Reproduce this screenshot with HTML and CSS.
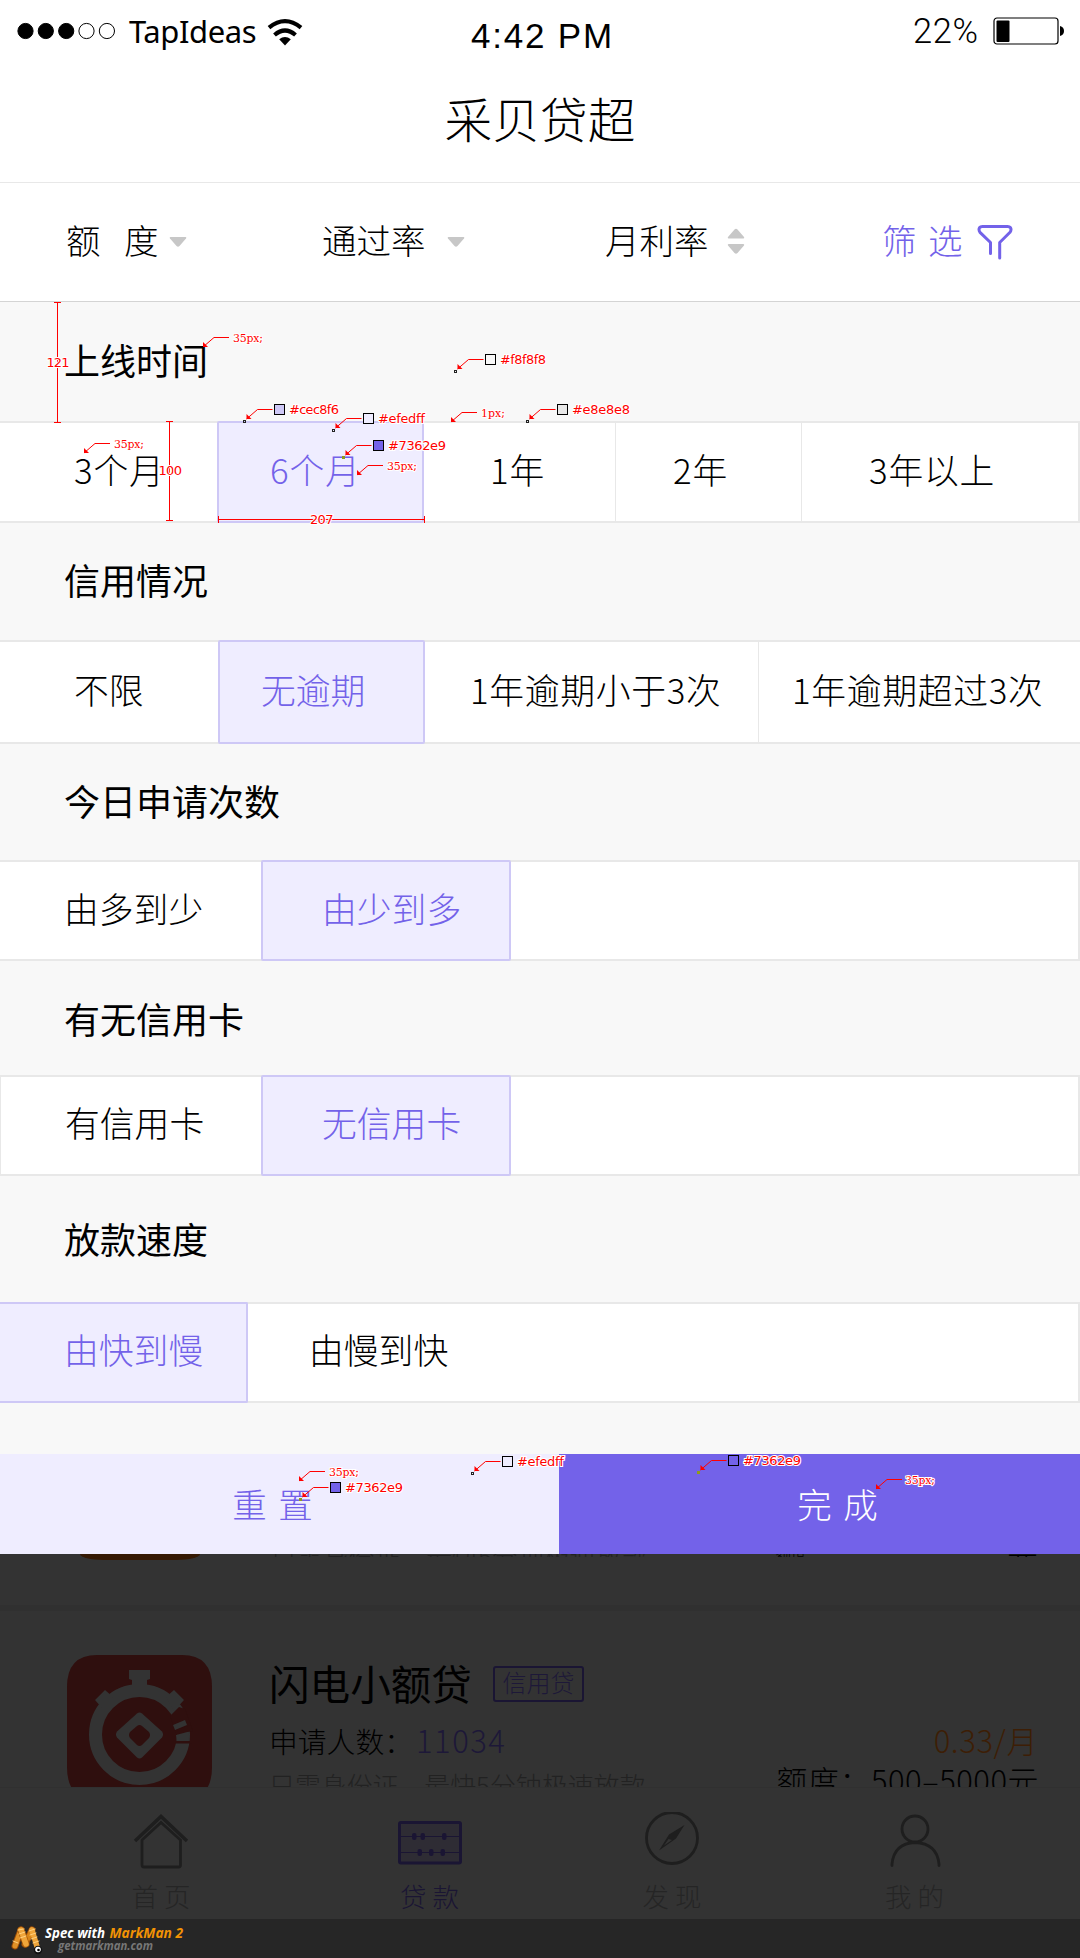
FILE: index.html
```html
<!DOCTYPE html>
<html lang="zh-CN">
<head>
<meta charset="utf-8">
<title>采贝贷超</title>
<link rel="stylesheet" href="styles.css">
</head>
<body>
<div class="screen">
  <header class="status">
    <svg class="signal" width="98" height="18" viewBox="0 0 98 18"><g stroke="#000" stroke-width="1"><circle cx="8.5" cy="9" r="7.6"/><circle cx="28.8" cy="9" r="7.6"/><circle cx="49.2" cy="9" r="7.6"/><circle cx="69.5" cy="9" r="7.6" fill="none"/><circle cx="89.9" cy="9" r="7.6" fill="none"/></g></svg>
    <span class="carrier">TapIdeas</span>
    <svg class="wifi" width="36" height="27" viewBox="0 0 36 27"><path d="M2 8.7Q18-4.300 34 8.700" fill="none" stroke="#000" stroke-width="4.200"/><path d="M7.500 16Q18 7 28.500 16" fill="none" stroke="#000" stroke-width="4.200"/><path d="M12.200 20.200Q18 15.600 23.800 20.200L18 26.500Z"/></svg>
    <span class="time">4:42 PM</span>
    <span class="percent">22%</span>
    <svg class="battery" width="72" height="28" viewBox="0 0 72 28"><rect x="1" y="1" width="64" height="26" rx="3" fill="none" stroke="#000" stroke-width="1.200"/><rect x="3.500" y="3.500" width="13" height="21.500" rx="1"/><path d="M67 9Q71 10 71 14T67 19Z"/></svg>
  </header>
  <h1 class="title">采贝贷超</h1>

  <nav class="filters">
    <div class="filter f-amount"><span class="wide">额 度</span><svg width="18" height="10" viewBox="0 0 18 10"><path d="M1.500 0H16.500Q17.800.500 17 1.600L10.500 9Q9 10.500 7.500 9L1 1.600Q.200.500 1.500 0Z" fill="#c7c7c7"/></svg></div>
    <div class="filter f-pass"><span>通过率</span><svg width="18" height="10" viewBox="0 0 18 10"><path d="M1.500 0H16.500Q17.800.500 17 1.600L10.500 9Q9 10.500 7.500 9L1 1.600Q.200.500 1.500 0Z" fill="#c7c7c7"/></svg></div>
    <div class="filter f-rate"><span>月利率</span><svg width="18" height="27" viewBox="0 0 18 27"><path d="M1.500 10.500H16.500Q17.800 10 17 9L10.500 1.500Q9 0 7.500 1.500L1 9Q.200 10 1.500 10.500ZM1.500 16H16.500Q17.800 16.500 17 17.600L10.500 25Q9 26.500 7.500 25L1 17.600Q.200 16.500 1.500 16Z" fill="#c7c7c7"/></svg></div>
    <div class="filter f-pick"><span class="spaced">筛 选</span><svg width="36" height="36" viewBox="0 0 36 36"><path d="M13.500 29.500V18.500L3 8.300Q1.300 6 2.500 3.700Q3.400 2.400 5.500 2.400H30.500Q32.600 2.400 33.500 3.700Q34.700 6 33 8.300L22.700 18.500V34" fill="none" stroke="#7362e9" stroke-width="3" stroke-linecap="round" stroke-linejoin="round"/></svg></div>
  </nav>

  <main class="panel">
    <h2 class="group g1">上线时间</h2>
    <div class="row r1 closed">
      <span class="cell c217">3个月</span><span class="cell c207 on p54">6个月</span><span class="cell c192 p69">1年</span><span class="cell c186 line p59">2年</span><span class="cell line p68">3年以上</span>
    </div>
    <h2 class="group g2">信用情况</h2>
    <div class="row r2">
      <span class="cell c218 plain">不限</span><span class="cell c207 on p44 plain">无逾期</span><span class="cell c333 p47">1年逾期小于3次</span><span class="cell line p34">1年逾期超过3次</span>
    </div>
    <h2 class="group g3">今日申请次数</h2>
    <div class="row r3 closed">
      <span class="cell c261">由多到少</span><span class="cell c250 on">由少到多</span>
    </div>
    <h2 class="group g4">有无信用卡</h2>
    <div class="row r4 closed">
      <span class="cell c261 edge">有信用卡</span><span class="cell c250 on">无信用卡</span>
    </div>
    <h2 class="group g5">放款速度</h2>
    <div class="row r5 closed">
      <span class="cell c248 on first">由快到慢</span><span class="cell p62">由慢到快</span>
    </div>
  </main>

  <div class="actions">
    <button class="reset">重 置</button>
    <button class="done">完 成</button>
  </div>

  <section class="list">
    <article class="card previous">
      <div class="amber"></div>
      <p class="desc">只需身份证，最快5分钟极速放款</p>
      <p class="amount">额度：</p>
      <p class="unit">元</p>
    </article>
    <article class="card">
      <svg class="logo" width="145" height="132" viewBox="0 0 145 132"><path d="M30 0H115Q145 0 145 32V112Q145 145 115 145H30Q0 145 0 112V32Q0 0 30 0Z" fill="#2f0f0e"/><ellipse cx="72.500" cy="79.500" rx="44" ry="44" fill="none" stroke="#333" stroke-width="13"/><path d="M62 15H83V24L80 25V34H65V25L62 24ZM28 45L38 35L46 42L35 53ZM99 42L107 35L117 45L107 56Z" fill="#333"/><path d="M103 61L112 52L118 54L126 76L109 78Z" fill="#2f0f0e"/><path d="M106 70L118 65L120 70L108 75ZM109 80L121 76L122 86L110 86.500Z" fill="#333"/><path d="M109 75L124 70L124 76L109 80ZM108 86H125V88.500H109Z" fill="#2f0f0e"/><path d="M70 59L50 77Q48 80 50 83L70 103Q72.500 105 75 103L95 83Q97 80 95 77L75 59Q72.500 57 70 59Z" fill="#333" transform="translate(0 -.5)"/><path d="M70 71L63 77Q61 80 63 83L70 90Q72.500 92 75 90L82 83Q84 80 82 77L75 71Q72.500 69 70 71Z" fill="#2f0f0e"/></svg>
      <div class="info">
        <div class="name"><b>闪电小额贷</b><i>信用贷</i></div>
        <p class="people">申请人数：<em>11034</em></p>
        <p class="desc">只需身份证，最快5分钟极速放款</p>
      </div>
      <div class="terms">
        <p class="rate">0.33/月</p>
        <p class="amount">额度：500–5000元</p>
      </div>
    </article>
  </section>

  <nav class="tabs">
    <a class="tab t-home"><svg width="60" height="60" viewBox="0 0 60 60" fill="none" stroke="#1e1e1e"><path d="M4 29L30 4.500L56 29" stroke-width="3.500"/><path d="M11 28L30 10.500L49.500 28V53Q49.500 55 47.500 55H13Q11 55 11 53Z" stroke-width="2.800"/></svg><span>首 页</span></a>
    <a class="tab t-loan"><svg width="66" height="60" viewBox="0 0 66 60"><rect x="2.500" y="10.500" width="61" height="40.500" rx="1.500" fill="#2e2c34" stroke="#1a1533" stroke-width="3"/><path d="M2 24.500H64M2 40.500H64" stroke="#1a1533" stroke-width="1.200"/><g fill="#1a1533"><rect x="15" y="21" width="4.500" height="7" rx="2"/><rect x="23.500" y="21" width="4.500" height="7" rx="2"/><rect x="45" y="21" width="4.500" height="7" rx="2"/><rect x="20.500" y="37" width="4.500" height="7" rx="2"/><rect x="32" y="37" width="4.500" height="7" rx="2"/><rect x="43.500" y="37" width="4.500" height="7" rx="2"/></g></svg><span>贷 款</span></a>
    <a class="tab t-find"><svg width="60" height="60" viewBox="0 0 60 60"><circle cx="30" cy="26" r="25.500" fill="none" stroke="#1e1e1e" stroke-width="2.800"/><path fill-rule="evenodd" d="M42.500 13L34 26.500L17 38.500L27 22.500ZM26.500 27L22 33.500L30 28Z" fill="#1e1e1e"/></svg><span>发 现</span></a>
    <a class="tab t-me"><svg width="60" height="60" viewBox="0 0 60 60" fill="none" stroke="#1e1e1e" stroke-width="2.800"><circle cx="30" cy="17" r="13"/><path d="M7 53.500V52Q9 31.500 30 30.500Q52 31.500 54 52V53.500" stroke-linecap="round"/></svg><span>我 的</span></a>
  </nav>

  <footer class="credit">
    <svg width="34" height="32" viewBox="0 0 34 32" fill="none" stroke-linecap="round"><path d="M5 23L11 7" stroke="#9a4c08" stroke-width="7"/><path d="M5 23L11 7" stroke="#e09128" stroke-width="5"/><path d="M22 7L15 21" stroke="#9a4c08" stroke-width="7"/><path d="M22 7L15 21" stroke="#d88619" stroke-width="5"/><path d="M11 7L16 21" stroke="#a95908" stroke-width="7"/><path d="M11 7L16 21M22 7L28 27" stroke="#efa53a" stroke-width="5.500"/><path d="M8 7L14 6M9 11L15 9M10 15L16 13M19 8L25 6M20 12L26 10M21 16L27 14M23 20L29 18M3 18L8 20" stroke="#ffd07e" stroke-width="1"/><circle cx="28" cy="27" r="4.200" fill="#111"/><circle cx="28" cy="26.500" r="2.800" fill="#fff"/><circle cx="28.500" cy="27" r="1.300" fill="#000"/></svg>
    <svg width="150" height="38" viewBox="0 0 150 38"><text class="brand" x="1" y="19" textLength="60" lengthAdjust="spacingAndGlyphs" fill="#fff">Spec with</text><text class="brand" x="65.500" y="19" textLength="73.500" lengthAdjust="spacingAndGlyphs" fill="#f29204">MarkMan 2</text><text class="site" x="14" y="31" textLength="95" lengthAdjust="spacingAndGlyphs" fill="#777">getmarkman.com</text></svg>
  </footer>

  <svg class="notes" width="1080" height="1958" viewBox="0 0 1080 1958">
    <defs>
      <g id="lead"><path d="M0 0L11-9.500H26" fill="none" stroke="#f00"/><path d="M0 0L0-5L5 0Z" fill="#f00"/></g>
      <g id="pick"><use href="#lead" x="2" y="-2.500"/><rect x="-1" y="-1" width="2" height="2" fill="none" stroke="#222"/></g>
    </defs>
    <g stroke="#f00" fill="none"><path d="M57.500 302V422M54 302.500H61M54 422.500H61M169.500 421V520M166 421.500H173M166 520.500H173M218 519.500H424M218.500 516V523M424.500 516V523"/></g>
    <g class="size"><text x="46.500" y="366.500" textLength="23">121</text><text x="158.500" y="474.500" textLength="23.500">100</text><text x="310" y="523.500" textLength="23.500">207</text></g>
    <use href="#lead" x="203" y="347"/><use href="#lead" x="84" y="453"/><use href="#lead" x="357" y="475"/><use href="#lead" x="451" y="422"/><use href="#lead" x="299" y="1481"/><use href="#lead" x="876" y="1489"/>
    <g class="px"><text x="233" y="342" textLength="30">35px;</text><text x="114" y="448" textLength="30">35px;</text><text x="387" y="470" textLength="30">35px;</text><text x="481" y="417" textLength="24">1px;</text><text x="329" y="1476" textLength="30">35px;</text><text x="905" y="1484" textLength="30">35px;</text></g>
    <use href="#pick" x="455.500" y="371.500"/><use href="#pick" x="244.500" y="421.500"/><use href="#pick" x="333.500" y="430.500"/><use href="#pick" x="343.500" y="457.500"/><use href="#pick" x="527.500" y="421.500"/><use href="#pick" x="300.500" y="1499.500"/><use href="#pick" x="472.500" y="1473.500"/><use href="#pick" x="698.500" y="1472.500"/>
    <g fill="#8f9a1c"><rect x="342" y="456" width="3" height="3"/><rect x="299" y="1498" width="3" height="3"/><rect x="697" y="1471" width="3" height="3"/></g>
    <g stroke="#000"><rect x="485.500" y="354.500" width="10" height="10" fill="#f8f8f8"/><rect x="274.500" y="404.500" width="10" height="10" fill="#cec8f6"/><rect x="363.500" y="413.500" width="10" height="10" fill="#efedff"/><rect x="373.500" y="440.500" width="10" height="10" fill="#7362e9"/><rect x="557.500" y="404.500" width="10" height="10" fill="#e8e8e8"/><rect x="330.500" y="1482.500" width="10" height="10" fill="#7362e9"/><rect x="502.500" y="1456.500" width="10" height="10" fill="#efedff"/><rect x="728.500" y="1455.500" width="10" height="10" fill="#7362e9"/></g>
    <g class="hex"><text x="500" y="364" textLength="46">#f8f8f8</text><text x="289" y="414" textLength="50">#cec8f6</text><text x="378" y="423" textLength="47">#efedff</text><text x="388" y="450" textLength="58">#7362e9</text><text x="572" y="414" textLength="58">#e8e8e8</text><text x="345" y="1492" textLength="58">#7362e9</text><text x="517" y="1466" textLength="47">#efedff</text><text x="743" y="1465" textLength="58">#7362e9</text></g>
  </svg>
</div>
</body>
</html>
```
FILE: styles.css
```css
* { box-sizing: border-box; }
body { margin: 0; background: #fff; color: #000; font-family: "Noto Sans CJK SC", "Liberation Sans", sans-serif; font-weight: 300; }
p, h1, h2 { margin: 0; font-weight: 300; }
svg { display: block; flex: none; }
.screen { position: relative; width: 1080px; height: 1958px; overflow: hidden; display: flex; flex-direction: column; }
.screen > * { flex: none; }

.status { height: 62px; display: flex; align-items: flex-start; padding-left: 17px; white-space: nowrap; }
.signal { margin-top: 22px; }
.carrier { width: 127px; margin: 9px 0 0 14px; font: 400 31px/44px "Noto Sans", sans-serif; letter-spacing: -.400px; }
.wifi { margin: 19px 0 0 11px; }
.time { width: 146px; margin: 15px 0 0 168px; font: 400 35px/42px "Liberation Sans", sans-serif; letter-spacing: 1.800px; }
.percent { width: 69px; margin: 10px 0 0 296px; font: 300 34.500px/42px "Roboto", sans-serif; letter-spacing: .600px; }
.battery { margin: 17px 0 0 11px; }
.title { height: 120px; font-size: 47.700px; line-height: 111px; text-align: center; }

.filters { height: 120px; display: flex; align-items: center; border-top: 1px solid #e8e8e8; border-bottom: 1px solid #d4d4d4; font-size: 34.500px; line-height: 113px; white-space: nowrap; }
.filter { display: flex; align-items: center; }
.filter span { margin-top: -6px; }
.filter svg { margin-top: -1px; }
.f-amount { width: 256px; padding-left: 66px; gap: 10px; }
.f-pass { width: 284px; padding-left: 66px; gap: 21px; }
.f-rate { width: 342px; padding-left: 65px; gap: 18px; }
.f-pick { color: #7362e9; gap: 14px; }
.wide { word-spacing: 16px; }
.spaced { word-spacing: 4px; }

.panel { height: 1152px; background: #f8f8f8; display: flex; flex-direction: column; }
.group { padding-left: 64px; font-size: 36px; font-weight: 400; }
.g1 { height: 119px; line-height: 115px; }
.g2 { height: 117px; line-height: 113px; }
.g3 { height: 116px; line-height: 112px; }
.g4 { height: 114px; line-height: 115px; }
.g5 { height: 126px; line-height: 125px; }
.row { height: 101px; display: flex; background: #fff; border-top: 2px solid #e8e8e8; border-bottom: 2px solid #e8e8e8; font-size: 34.800px; line-height: 93px; white-space: nowrap; }
.r1 { height: 102px; letter-spacing: .800px; line-height: 92px; }
.r2 { height: 104px; line-height: 94px; letter-spacing: .700px; }
.plain { letter-spacing: 0; }
.r4 { line-height: 90px; }
.r5 { line-height: 91px; }
.closed { border-right: 2px solid #e8e8e8; }
.cell { padding-left: 74px; }
.line { border-left: 1px solid #e8e8e8; }
.edge { border-left: 1px solid #e8e8e8; }
.cell.on { margin: -2px 0; padding-top: 0; border: 2px solid #cec8f6; border-radius: 2px; background: #efedff; color: #7362e9; }
.cell.first { border-left: 0; border-radius: 0 2px 2px 0; }
.c217 { width: 217px; }
.c218 { width: 218px; }
.c207 { width: 207px; }
.c192 { width: 191px; }
.c186 { width: 186px; }
.c333 { width: 333px; }
.c261 { width: 261px; padding-left: 64px; }
.c250 { width: 250px; padding-left: 59px; }
.c248 { width: 248px; padding-left: 64px; }
.edge { padding-left: 64px; }
.p54 { padding-left: 51px; }
.p69 { padding-left: 66px; }
.p59 { padding-left: 57px; }
.p68 { padding-left: 67px; }
.p44 { padding-left: 41px; }
.p47 { padding-left: 45px; }
.p34 { padding-left: 33px; }
.p62 { padding-left: 61px; }

.actions { height: 100px; display: flex; }
.actions button { border: 0; padding: 0 0 3px; font: 300 34.500px/96px "Noto Sans CJK SC", sans-serif; word-spacing: 4px; }
.actions .reset { width: 559px; background: #efedff; color: #7362e9; padding-right: 14px; }
.actions .done { flex: 1; background: #7362e9; color: #fff; padding-left: 36px; }

.list { height: 233px; background: #333; color: #000; overflow: hidden; white-space: nowrap; }
.card { display: flex; height: 232px; padding: 44px 42px 0 67px; }
.card.previous { height: 57px; padding-top: 0; border-bottom: 6px solid #303030; }
.amber { width: 120px; height: 6px; margin: 0 12px 0 13px; background: #351904; border-radius: 0 0 24px 24px / 0 0 6px 6px; }
.previous p { height: 3px; overflow: hidden; line-height: 3px; display: flex; align-items: flex-end; }
.previous p.desc { width: 505px; margin-left: 59px; line-height: 3px; }
.previous p.amount { width: 232px; }
.previous p.unit { font-size: 31px; }
.info { margin-left: 57px; width: 441px; }
.name { display: flex; align-items: center; height: 58px; gap: 21px; }
.name b { font-size: 40.600px; line-height: 58px; font-weight: 400; margin-top: -3px; }
.name i { height: 36px; width: 91px; border: 2px solid #1a1533; border-radius: 3px; color: #1d1838; font: 300 24px/28px "Noto Sans CJK SC", sans-serif; text-align: center; margin-top: -1px; }
.people { font-size: 28.800px; line-height: 53px; height: 56px; }
.people em { font-style: normal; font-size: 31px; color: #1d1838; margin-left: 3px; letter-spacing: 1.500px; }
.desc { font-size: 25.900px; line-height: 32px; color: #222; }
.terms { flex: 1; text-align: right; padding-top: 58px; }
.rate { font-size: 31px; line-height: 54px; height: 50px; color: #3d1e05; letter-spacing: .600px; }
.terms .amount { font-size: 31px; line-height: 34px; letter-spacing: .500px; margin-right: -1px; }

.tabs { height: 132px; background: #333; border-top: 1px solid #303030; display: flex; color: #252525; font-size: 26.500px; }
.tab { display: flex; flex-direction: column; align-items: center; padding-top: 24px; }
.tab span { line-height: 40px; margin-top: 4px; }
.t-home { width: 322px; }
.t-loan { width: 215px; color: #1a1533; }
.t-find { width: 270px; }
.t-me { width: 215px; }

.credit { height: 39px; background: #262626; display: flex; padding-left: 10px; }
.credit > svg:first-child { margin-top: 4px; }
.brand { font: italic 700 14px "Open Sans", sans-serif; }
.site { font: italic 700 11.500px "Open Sans", sans-serif; }

.notes { position: absolute; left: 0; top: 0; }
.notes text { fill: #f00; stroke: #fff; stroke-width: 2px; paint-order: stroke; font-weight: 400; }
.size, .hex { font-family: "DejaVu Sans", sans-serif; font-size: 13px; }
.px { font-family: "DejaVu Serif", serif; font-size: 11px; }
```
